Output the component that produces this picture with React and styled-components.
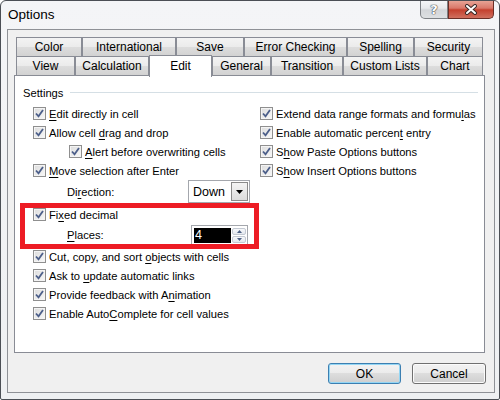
import styled, { createGlobalStyle } from "styled-components";

const Global = createGlobalStyle`
  html, body { margin: 0; padding: 0; background: #ffffff; }
  body { font-family: "Liberation Sans", Arial, sans-serif; font-size: 11.2px; color: #000000; }
`;

// 창 전체
const Window = styled.div`
  width: 500px;
  height: 400px;
  box-sizing: border-box;
  border: 1px solid #4b4f55;
  border-radius: 6px 6px 2px 2px;
  background: linear-gradient(#f4f5f7, #eef0f2);
  display: flex;
  flex-direction: column;
  overflow: hidden;
`;

const TitleBar = styled.div`
  height: 28px;
  display: flex;
  align-items: flex-start;
  padding-left: 7px;
`;

const Title = styled.span`
  font-size: 13.5px;
  line-height: 28px;
`;

const Caption = styled.div`
  margin-left: auto;
  margin-right: 5px;
  margin-top: -1px;
  display: flex;
`;

const CaptionButton = styled.div`
  width: ${(p) => p.$w}px;
  height: 19px;
  box-sizing: border-box;
  display: flex;
  align-items: center;
  justify-content: center;
  border: 1px solid ${(p) => (p.$close ? "#6b2e26" : "#7d8185")};
  border-top: none;
  border-radius: ${(p) => (p.$close ? "0 0 5px 0" : "0 0 0 5px")};
  background: ${(p) =>
    p.$close
      ? "linear-gradient(#e9a99b, #d9786a 45%, #c4402e 55%, #d0705f)"
      : "linear-gradient(#f7f8f9, #e8eaec 45%, #d3d6d9 55%, #dde0e2)"};
  font-family: "DejaVu Sans", sans-serif;
  font-size: 13px;
  font-weight: bold;
  color: #ffffff;
  text-shadow: 0 0 1px #3c3f44, 0 0 1px #3c3f44, 0 0 1px #3c3f44;
`;

// 다이얼로그 본문
const Client = styled.div`
  flex: 1;
  margin: 0 4px 6px 6px;
  border: 1px solid #8e9196;
  background: #f0f0f0;
  padding: 7px 9px 7px 6px;
  display: flex;
  flex-direction: column;
`;

const Tabs = styled.div`
  padding-left: 2px;
  display: flex;
  flex-direction: column;
`;

const TabRow = styled.div`
  display: flex;
  align-items: flex-end;
  height: 19px;
  position: relative;
  z-index: ${(p) => (p.$front ? 2 : 1)};
`;

const Tab = styled.div`
  width: ${(p) => p.$w}px;
  box-sizing: border-box;
  height: ${(p) => (p.$active ? 22 : 20)}px;
  margin-bottom: ${(p) => (p.$active ? -2 : -1)}px;
  border: 1px solid #898c95;
  border-bottom: ${(p) => (p.$active ? "none" : "1px solid #898c95")};
  background: ${(p) =>
    p.$active ? "#ffffff" : "linear-gradient(#f3f3f3, #ebebeb 50%, #dddddd 50%, #d2d2d2)"};
  display: flex;
  align-items: center;
  justify-content: center;
  padding-bottom: ${(p) => (p.$active ? 2 : 0)}px;
  font-size: 12px;
  position: relative;
  z-index: ${(p) => (p.$active ? 3 : 1)};
`;

const Panel = styled.div`
  height: 278px;
  box-sizing: border-box;
  border: 1px solid #898c95;
  background: #ffffff;
  padding: 9px 6px 0 8px;
  position: relative;
`;

const GroupHeader = styled.div`
  display: flex;
  align-items: center;
  height: 15px;
  gap: 7px;
  &::after {
    content: "";
    flex: 1;
    height: 1px;
    background: #d5dfe5;
  }
`;

const Columns = styled.div`
  display: flex;
  padding-left: 10px;
  margin-top: 4px;
`;

const Column = styled.div`
  width: ${(p) => p.$w}px;
  display: flex;
  flex-direction: column;
`;

const Row = styled.div`
  height: ${(p) => p.$h || 19}px;
  margin-bottom: ${(p) => p.$mb || 0}px;
  padding-left: ${(p) => p.$indent || 0}px;
  display: flex;
  align-items: center;
  white-space: nowrap;
`;

const Box = styled.span`
  width: 13px;
  height: 13px;
  box-sizing: border-box;
  border: 1px solid #8f8f8f;
  background: linear-gradient(135deg, #dcdcdc, #f8f8f8);
  box-shadow: inset 0 0 0 1px #f4f4f4;
  margin-right: 3px;
  display: flex;
  align-items: center;
  justify-content: center;
  flex-shrink: 0;
`;

const Acc = styled.span`
  text-decoration: underline;
  text-underline-offset: 2px;
`;

const FieldLabel = styled.span`
  width: ${(p) => p.$w}px;
`;

const Select = styled.div`
  width: 62px;
  height: 23px;
  box-sizing: border-box;
  border: 1px solid #a4a7ad;
  background: #ffffff;
  display: flex;
  align-items: stretch;
  padding: 1px;
`;

const SelectText = styled.span`
  flex: 1;
  padding-left: 3px;
  font-size: 12.5px;
  display: flex;
  align-items: center;
`;

const SelectArrow = styled.span`
  width: 17px;
  box-sizing: border-box;
  border: 1px solid #8a8a8a;
  background: linear-gradient(#f4f4f4, #dcdcdc);
  display: flex;
  align-items: center;
  justify-content: center;
`;

const Spinner = styled.div`
  width: 57px;
  height: 21px;
  box-sizing: border-box;
  border: 1px solid #a4a7ad;
  background: #ffffff;
  display: flex;
  padding: 2px 1px 2px 2px;
  gap: 1px;
`;

const SpinValue = styled.span`
  flex: 1;
  background: #000000;
  color: #ffffff;
  font-size: 12.5px;
  display: flex;
  align-items: center;
  padding-left: 1px;
`;

const SpinButtons = styled.div`
  width: 14px;
  display: flex;
  flex-direction: column;
  gap: 1px;
`;

const SpinButton = styled.span`
  flex: 1;
  border: 1px solid #c3c9d2;
  border-radius: 2px;
  background: linear-gradient(#f7f8fa, #e4e8ee);
  display: flex;
  align-items: center;
  justify-content: center;
`;

// 빨간 강조 표시 (스크린샷 위에 그려진 주석)
const Highlight = styled.div`
  position: absolute;
  left: 5px;
  top: 127px;
  width: 239px;
  height: 46px;
  box-sizing: border-box;
  border: 5px solid #ed1c24;
  pointer-events: none;
`;

const ButtonRow = styled.div`
  margin-top: 10px;
  margin-right: -1px;
  display: flex;
  justify-content: flex-end;
  gap: 11px;
`;

const Button = styled.div`
  width: ${(p) => p.$w}px;
  height: 21px;
  box-sizing: border-box;
  border: 1px solid ${(p) => (p.$default ? "#3c7fb1" : "#707070")};
  border-radius: 3px;
  background: linear-gradient(#f2f2f2, #ebebeb 50%, #dddddd 50%, #cfcfcf);
  box-shadow: inset 0 0 0 1px ${(p) => (p.$default ? "#94d6f4" : "#fbfbfb")};
  display: flex;
  align-items: center;
  justify-content: center;
  font-size: 12px;
`;

const Check = () => (
  <svg width="9" height="9" viewBox="0 0 9 9">
    <path d="M1 4.5 L3.5 7.3 L8 1" fill="none" stroke="#4c5f8a" strokeWidth="1.8" />
  </svg>
);

const Checkbox = ({ children, indent }) => (
  <Row $indent={indent}>
    <Box>
      <Check />
    </Box>
    <span>{children}</span>
  </Row>
);

const CloseGlyph = () => (
  <svg width="14" height="11" viewBox="0 0 14 11">
    <path d="M3 2 L11 9 M11 2 L3 9" stroke="#3a2a28" strokeWidth="4" strokeLinecap="round" />
    <path d="M3 2 L11 9 M11 2 L3 9" stroke="#ffffff" strokeWidth="2" strokeLinecap="round" />
  </svg>
);

const tabsBack = [
  ["Color", 66],
  ["International", 94],
  ["Save", 68],
  ["Error Checking", 103],
  ["Spelling", 67],
  ["Security", 69],
];

const tabsFront = [
  ["View", 59],
  ["Calculation", 74],
  ["Edit", 63],
  ["General", 59],
  ["Transition", 72],
  ["Custom Lists", 84],
  ["Chart", 56],
];

export default function App() {
  return (
    <>
      <Global />
      <Window>
        <TitleBar>
          <Title>Options</Title>
          <Caption>
            <CaptionButton $w={28}>?</CaptionButton>
            <CaptionButton $w={46} $close>
              <CloseGlyph />
            </CaptionButton>
          </Caption>
        </TitleBar>

        <Client>
          <Tabs>
            <TabRow>
              {tabsBack.map(([name, w]) => (
                <Tab key={name} $w={w}>{name}</Tab>
              ))}
            </TabRow>
            <TabRow $front>
              {tabsFront.map(([name, w]) => (
                <Tab key={name} $w={w} $active={name === "Edit"}>{name}</Tab>
              ))}
            </TabRow>
          </Tabs>

          <Panel>
            <GroupHeader>Settings</GroupHeader>
            <Columns>
              <Column $w={227}>
                <Checkbox><Acc>E</Acc>dit directly in cell</Checkbox>
                <Checkbox>Allow cell <Acc>d</Acc>rag and drop</Checkbox>
                <Checkbox indent={36}><Acc>A</Acc>lert before overwriting cells</Checkbox>
                <Checkbox><Acc>M</Acc>ove selection after Enter</Checkbox>
                <Row $indent={34} $h={23} $mb={2}>
                  <FieldLabel $w={121}>Di<Acc>r</Acc>ection:</FieldLabel>
                  <Select>
                    <SelectText>Down</SelectText>
                    <SelectArrow>
                      <svg width="7" height="4" viewBox="0 0 7 4">
                        <path d="M0 0 H7 L3.5 4 Z" fill="#000000" />
                      </svg>
                    </SelectArrow>
                  </Select>
                </Row>
                <Checkbox>Fi<Acc>x</Acc>ed decimal</Checkbox>
                <Row $indent={34} $h={22} $mb={1}>
                  <FieldLabel $w={124}><Acc>P</Acc>laces:</FieldLabel>
                  <Spinner>
                    <SpinValue>4</SpinValue>
                    <SpinButtons>
                      <SpinButton>
                        <svg width="5" height="3" viewBox="0 0 5 3">
                          <path d="M0 3 H5 L2.5 0 Z" fill="#4d6185" />
                        </svg>
                      </SpinButton>
                      <SpinButton>
                        <svg width="5" height="3" viewBox="0 0 5 3">
                          <path d="M0 0 H5 L2.5 3 Z" fill="#4d6185" />
                        </svg>
                      </SpinButton>
                    </SpinButtons>
                  </Spinner>
                </Row>
                <Checkbox>Cut, copy, and sort <Acc>o</Acc>bjects with cells</Checkbox>
                <Checkbox>Ask to <Acc>u</Acc>pdate automatic links</Checkbox>
                <Checkbox>Provide feedback with A<Acc>n</Acc>imation</Checkbox>
                <Checkbox>Enable Auto<Acc>C</Acc>omplete for cell values</Checkbox>
              </Column>
              <Column $w={215}>
                <Checkbox>Extend data range formats and formu<Acc>l</Acc>as</Checkbox>
                <Checkbox>Enable automatic percen<Acc>t</Acc> entry</Checkbox>
                <Checkbox>S<Acc>h</Acc>ow Paste Options buttons</Checkbox>
                <Checkbox>S<Acc>h</Acc>ow Insert Options buttons</Checkbox>
              </Column>
            </Columns>
            <Highlight />
          </Panel>

          <ButtonRow>
            <Button $w={73} $default>OK</Button>
            <Button $w={74}>Cancel</Button>
          </ButtonRow>
        </Client>
      </Window>
    </>
  );
}
